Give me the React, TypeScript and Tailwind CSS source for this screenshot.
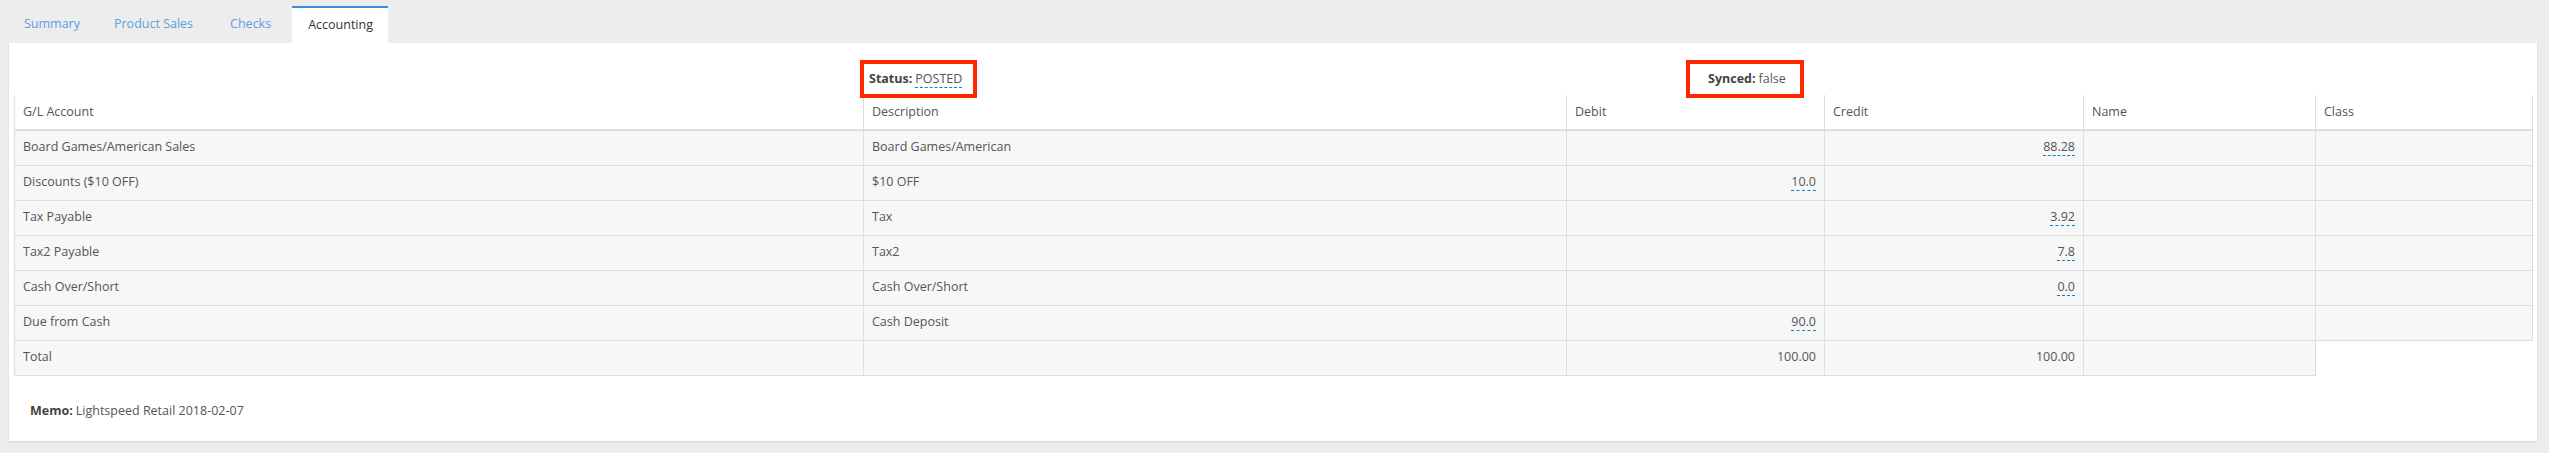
import React from "react";

const font = { fontFamily: '"Open Sans", "Liberation Sans", sans-serif' };

type Row = {
  account: string;
  description: string;
  debit?: string;
  credit?: string;
};

const rows: Row[] = [
  { account: "Board Games/American Sales", description: "Board Games/American", credit: "88.28" },
  { account: "Discounts ($10 OFF)", description: "$10 OFF", debit: "10.0" },
  { account: "Tax Payable", description: "Tax", credit: "3.92" },
  { account: "Tax2 Payable", description: "Tax2", credit: "7.8" },
  { account: "Cash Over/Short", description: "Cash Over/Short", credit: "0.0" },
  { account: "Due from Cash", description: "Cash Deposit", debit: "90.0" },
];

const Editable = ({ value }: { value: string }) => (
  <span className="border-b border-dashed border-[#0a84c9]">{value}</span>
);

const cell = "border border-[#dddddd] px-2 h-[35px] align-middle";

export default function App() {
  return (
    <div className="h-[453px] bg-[#ededed] pl-[9px] pr-[12px] text-[12.5px] text-[#555555]" style={font}>
      {/* tabs */}
      <div className="flex items-end h-[43px]">
        <div className="px-[15px] h-[37px] flex items-center text-[#5b9ee2] mr-[4px]">Summary</div>
        <div className="px-[15px] h-[37px] flex items-center text-[#5b9ee2] mr-[7px]">Product Sales</div>
        <div className="px-[15px] h-[37px] flex items-center text-[#5b9ee2] mr-[6px]">Checks</div>
        <div className="pl-[16px] pr-[15px] h-[37px] flex items-center bg-white border-t-2 border-[#3d8fdb] text-[#333333]">
          Accounting
        </div>
      </div>

      <div className="bg-white px-[5px] pt-[17px] pb-[20px] shadow-[0_1px_2px_rgba(0,0,0,0.12)] rounded-br-[2px]">
        {/* status line */}
        <div className="relative z-10 flex h-[38px]">
          <div className="ml-[846px] w-[117px] border-4 border-[#ff2600] bg-white flex items-center pl-[5px]">
            <span className="font-bold text-[#444444]">Status:</span>
            <span className="ml-[3px]">
              <Editable value="POSTED" />
            </span>
          </div>
          <div className="ml-[709px] w-[118px] border-4 border-[#ff2600] bg-white flex items-center pl-[18px]">
            <span className="font-bold text-[#444444]">Synced:</span>
            <span className="ml-[3px]">false</span>
          </div>
        </div>

        <table className="-mt-[3px] table-fixed border-collapse w-[2518px]">
          <colgroup>
            <col className="w-[849px]" />
            <col className="w-[703px]" />
            <col className="w-[258px]" />
            <col className="w-[259px]" />
            <col className="w-[232px]" />
            <col className="w-[217px]" />
          </colgroup>
          <thead>
            <tr className="bg-white">
              {["G/L Account", "Description", "Debit", "Credit", "Name", "Class"].map((h) => (
                <th
                  key={h}
                  className="border-x border-b-2 border-[#dddddd] px-2 h-[35px] text-left font-normal align-middle"
                >
                  {h}
                </th>
              ))}
            </tr>
          </thead>
          <tbody>
            {rows.map((r) => (
              <tr key={r.account} className="bg-[#f7f7f7]">
                <td className={cell}>{r.account}</td>
                <td className={cell}>{r.description}</td>
                <td className={`${cell} text-right`}>{r.debit && <Editable value={r.debit} />}</td>
                <td className={`${cell} text-right`}>{r.credit && <Editable value={r.credit} />}</td>
                <td className={cell}></td>
                <td className={cell}></td>
              </tr>
            ))}
            <tr className="bg-[#f7f7f7]">
              <td className={cell}>Total</td>
              <td className={cell}></td>
              <td className={`${cell} text-right`}>100.00</td>
              <td className={`${cell} text-right`}>100.00</td>
              <td className={cell}></td>
            </tr>
          </tbody>
        </table>

        <div className="mt-[27px] pl-[16px] h-[18px] flex items-center">
          <span className="font-bold text-[#444444]">Memo:</span>
          <span className="ml-[3px]">Lightspeed Retail 2018-02-07</span>
        </div>
      </div>
    </div>
  );
}
